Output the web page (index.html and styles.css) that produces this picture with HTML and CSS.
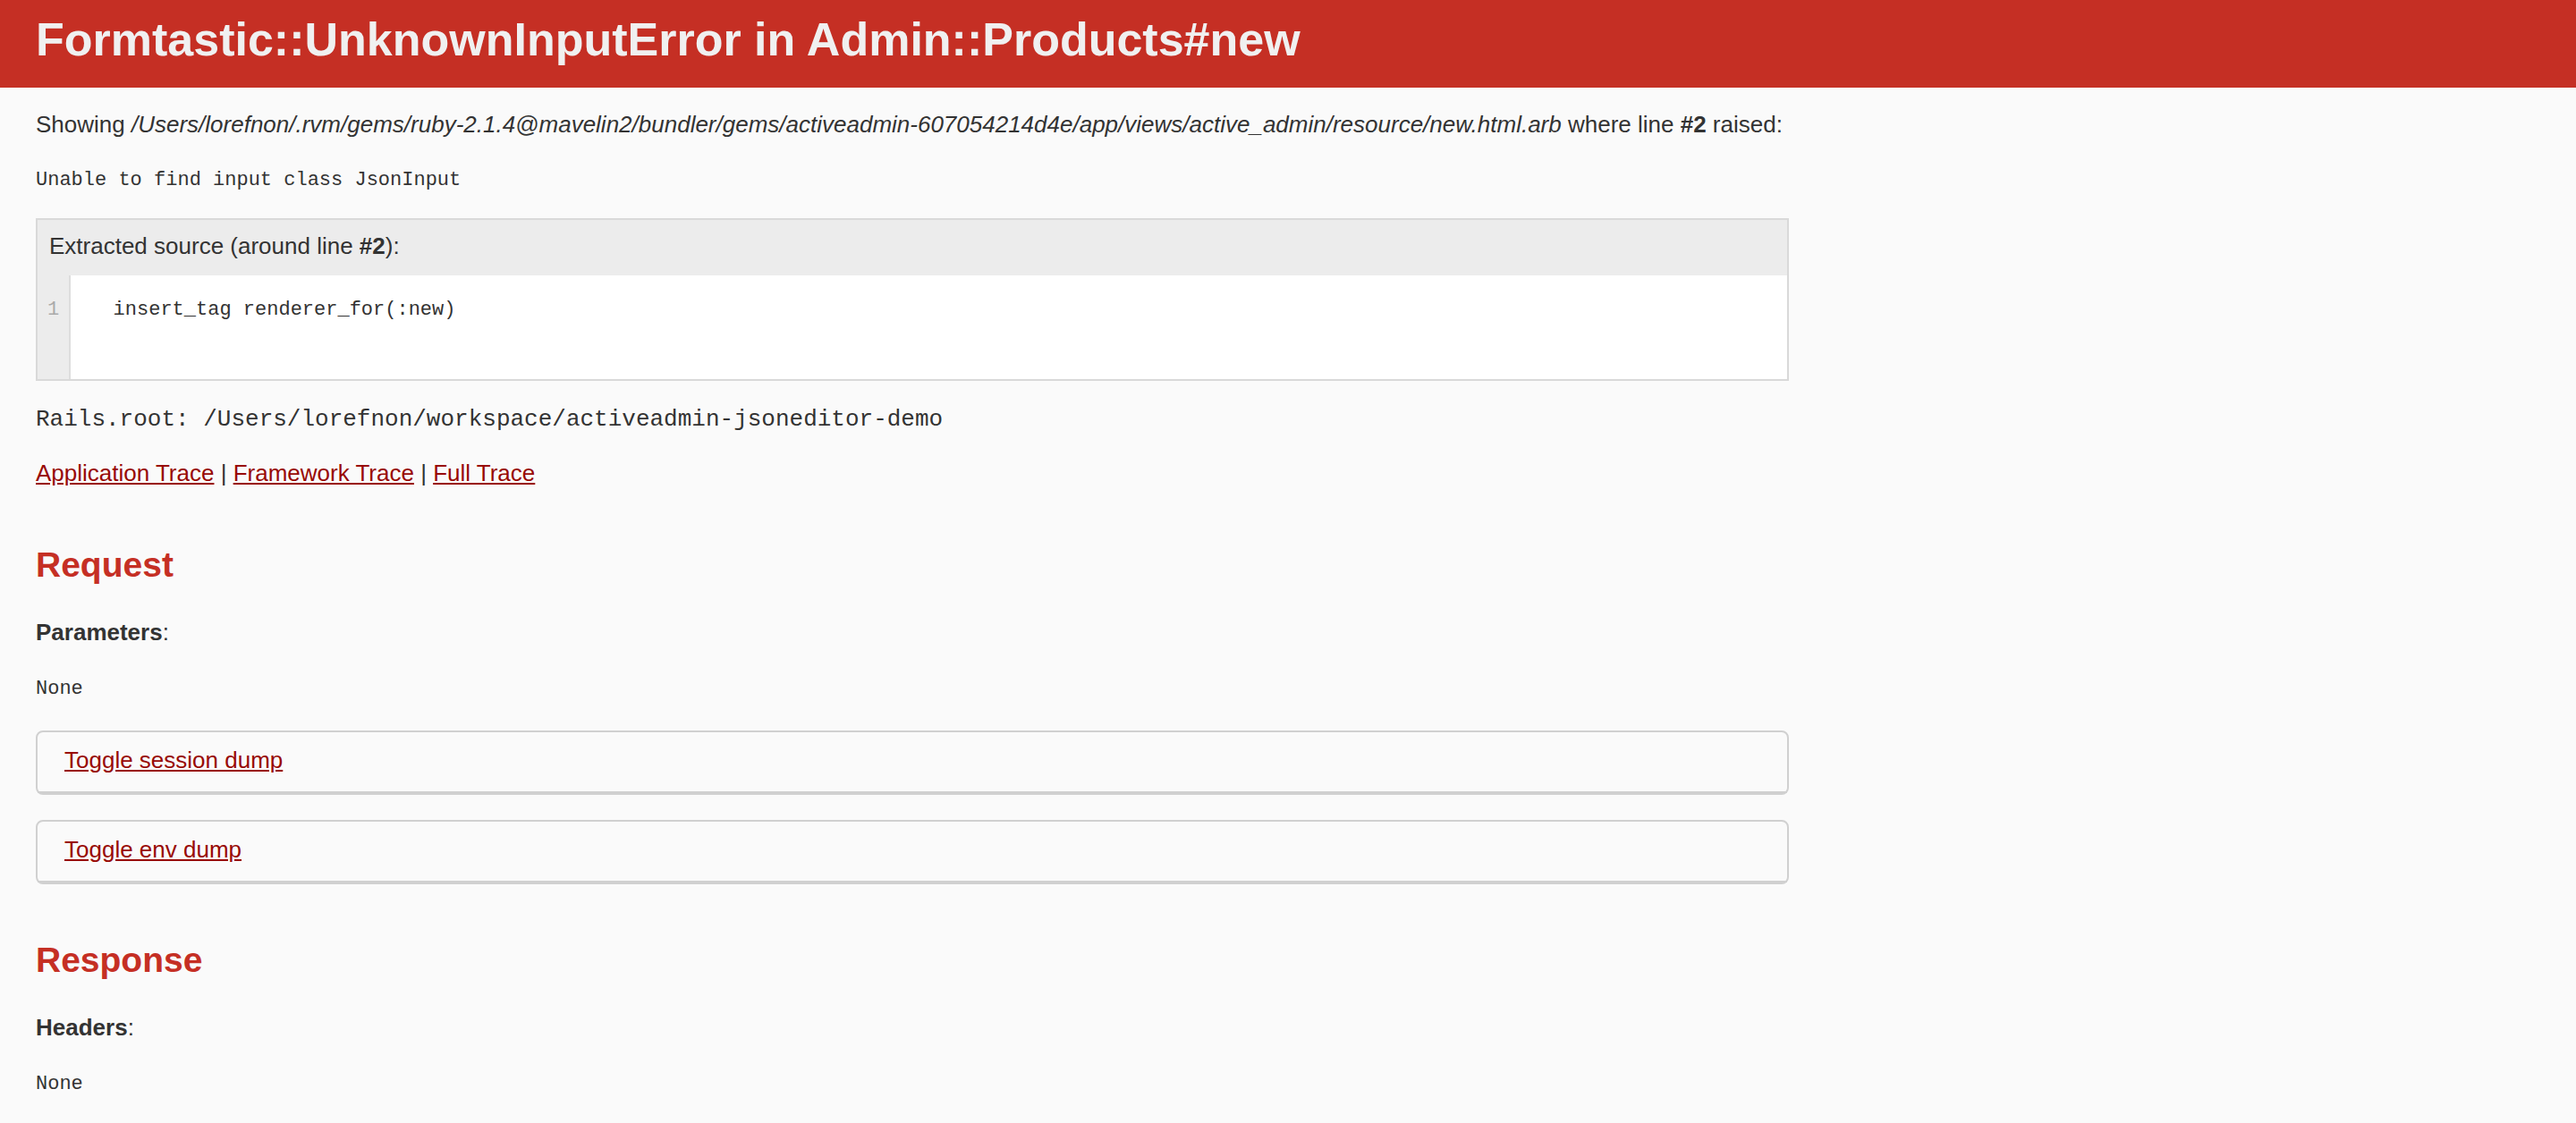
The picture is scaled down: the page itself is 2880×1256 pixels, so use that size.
FILE: index.html
```html
<!DOCTYPE html>
<html>
<head>
<meta charset="utf-8">
<title>Action Controller: Exception caught</title>
<link rel="stylesheet" href="styles.css">
</head>
<body>
<header class="page-header">
  <h1 class="title">Formtastic::UnknownInputError in Admin::Products#new</h1>
</header>
<div class="container">
  <p class="showing">Showing <i>/Users/lorefnon/.rvm/gems/ruby-2.1.4@mavelin2/bundler/gems/activeadmin-607054214d4e/app/views/active_admin/resource/new.html.arb</i> where line <b>#2</b> raised:</p>
  <pre class="message"><code>Unable to find input class JsonInput</code></pre>

  <div class="source">
    <div class="info">Extracted source (around line <strong>#2</strong>):</div>
    <div class="data">
      <table class="lines">
        <tr>
          <td class="line-numbers-cell"><pre class="line-numbers"><span>1</span></pre></td>
          <td class="code-cell"><pre class="code"><div class="line">  insert_tag renderer_for(:new)</div></pre></td>
        </tr>
      </table>
    </div>
  </div>

  <p class="root"><code>Rails.root: /Users/lorefnon/workspace/activeadmin-jsoneditor-demo</code></p>

  <div class="traces">
    <a href="#" class="link">Application Trace</a> |
    <a href="#" class="link">Framework Trace</a> |
    <a href="#" class="link">Full Trace</a>
  </div>

  <h2 class="section">Request</h2>
  <p class="label"><b>Parameters</b>:</p>
  <pre class="none">None</pre>

  <div class="details">
    <div class="summary"><a href="#" class="link">Toggle session dump</a></div>
  </div>
  <div class="details">
    <div class="summary"><a href="#" class="link">Toggle env dump</a></div>
  </div>

  <h2 class="section">Response</h2>
  <p class="label"><b>Headers</b>:</p>
  <pre class="none">None</pre>
</div>
</body>
</html>
```

FILE: styles.css
```css
html, body {
  margin: 0;
  padding: 0;
}

body {
  background-color: #FAFAFA;
  color: #333;
  font-family: "Liberation Sans", Helvetica, Arial, sans-serif;
  font-size: 26px;
  line-height: 36px;
}

p, pre, h1, h2 {
  margin: 0;
}

pre, code {
  font-family: "Liberation Mono", Courier, monospace;
}

.page-header {
  color: #F0F0F0;
  background: #C52F24;
  padding: 16px 40px 25px;
}

.title {
  font-size: 52px;
  line-height: 57px;
  font-weight: bold;
}

.container {
  padding: 0 40px;
}

.showing {
  margin-top: 23px;
}

.message {
  margin-top: 32px;
  font-size: 22px;
  line-height: 25px;
  white-space: pre-wrap;
}

.message code {
  font: inherit;
}

.source {
  margin-top: 30px;
  width: 1956px;
  border: 2px solid #D9D9D9;
  background: #ECECEC;
}

.info {
  padding: 11px 13px 15px;
}

.data {
  background-color: #FFF;
  height: 116px;
}

.lines {
  border-collapse: collapse;
  border-spacing: 0;
  width: 100%;
  height: 100%;
}

.lines td {
  padding: 0;
  vertical-align: top;
}

.line-numbers-cell {
  background-color: #ECECEC;
  border-right: 2px solid #DDD;
  width: 35px;
}

.line-numbers {
  color: #AAA;
  font-size: 22px;
  line-height: 25px;
  padding: 26px 11px 0 11px;
  text-align: right;
}

.code-cell {
  width: 100%;
}

.code {
  font-size: 22px;
  line-height: 25px;
  padding-top: 26px;
}

.line {
  padding-left: 21px;
}

.root {
  margin-top: 25px;
  font-family: "Liberation Mono", Courier, monospace;
  font-size: 26px;
  line-height: 36px;
}

.root code {
  font: inherit;
}

.traces {
  margin-top: 24px;
}

.link {
  color: #980905;
  text-decoration: underline;
}

.section {
  margin-top: 60px;
  color: #C52F24;
  font-size: 39px;
  line-height: 50px;
  font-weight: bold;
}

.label {
  margin-top: 32px;
}

.none {
  margin-top: 33px;
  font-size: 22px;
  line-height: 25px;
}

.details {
  margin-top: 28px;
  width: 1956px;
  border: 2px solid #D0D0D0;
  border-radius: 8px;
}

.none + .details {
  margin-top: 34px;
}

.summary {
  padding: 13px 30px 17px;
  border-bottom: 2px solid #D0D0D0;
}
```
